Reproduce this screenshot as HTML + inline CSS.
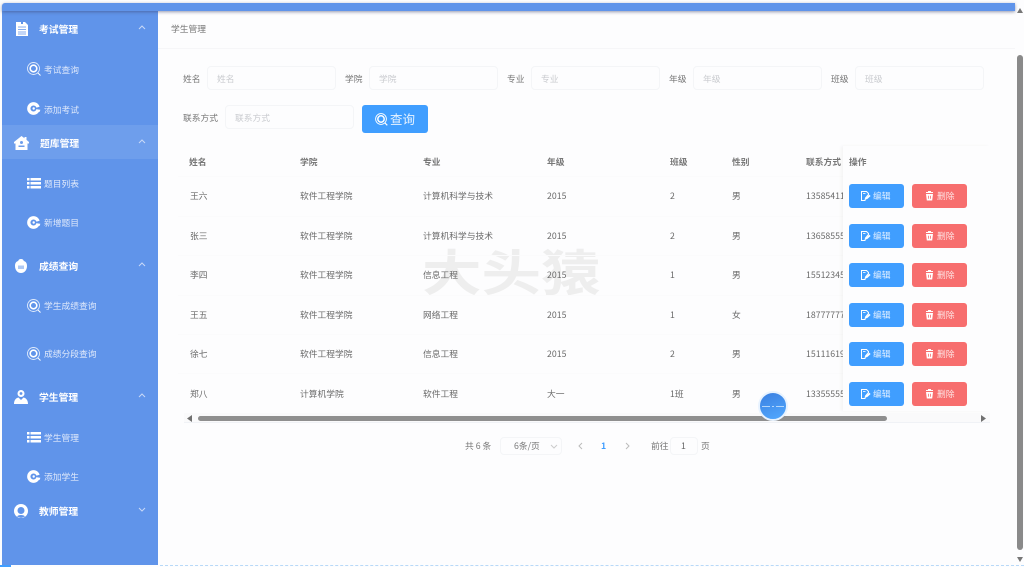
<!DOCTYPE html>
<html lang="zh"><head><meta charset="utf-8"><title>学生管理</title>
<style>
html,body{margin:0;padding:0;width:1024px;height:567px;overflow:hidden;background:#fdfdfe;font-family:"Noto Sans CJK SC","Liberation Sans",sans-serif;}
.a{position:absolute;white-space:nowrap;line-height:14px;}
.top{position:absolute;left:2px;top:3px;width:1013px;height:8px;background:#6094ea;border-radius:3px 0 0 0;box-shadow:0 1px 3px rgba(60,70,110,.55);}
.side{position:absolute;left:2px;top:11px;width:156px;height:554px;background:#6094ea;}
.hl{position:absolute;left:2px;top:125px;width:156px;height:34px;background:#6e9eec;}
.g{color:#fff;font-size:9.8px;font-weight:bold;}
.s{color:#dfe9fb;font-size:8.75px;}
.t{color:#6a6a6a;font-size:8.75px;}
.h{color:#777;font-size:8.75px;font-weight:bold;}
.l{color:#777;font-size:8.75px;}
.ph{color:#c9cbcf;font-size:8.75px;}
.ip{position:absolute;height:24px;border:1px solid #f4f5f7;border-radius:4px;box-sizing:border-box;}
.be,.bd{position:absolute;width:55px;height:24px;border-radius:3px;color:#e4f0ff;font-size:8.75px;line-height:24px;}
.be{left:849px;background:#409eff;}
.bd{left:912px;background:#f76e6e;color:#fde0e0;}
.be span{position:absolute;left:24px;top:0;}
.bd span{position:absolute;left:25px;top:0;}
.be svg{position:absolute;left:12px;top:7px;}
.bd svg{position:absolute;left:13px;top:7px;}
.ln{position:absolute;left:178px;width:812px;height:1px;background:#fbfbfc;}
svg{position:absolute;overflow:visible;}
</style></head><body>
<svg width="0" height="0" style="position:absolute"><defs>
<g id="q"><circle cx="6.500" cy="6.500" r="6" fill="none" stroke="#fff" stroke-width=".9" opacity=".8"/><circle cx="6.500" cy="6.500" r="3.300" fill="none" stroke="#fff" stroke-width="1.600"/><path d="M10.800 10.800l2.700 2.700" stroke="#fff" stroke-width="1"/></g>
<g id="c"><circle cx="6.500" cy="6.500" r="4.700" fill="none" stroke="#fff" stroke-width="3.300"/><path d="M6.500 6.500L13.500 4.500V8z" fill="#6094ea"/><circle cx="6.700" cy="6.500" r="1.200" fill="#fff"/><path d="M9 7.800h4.300l-.5 2H9z" fill="#fff"/></g>
<g id="li"><path d="M0 0h2.500v2.500H0zM3.500 0H14v2.500H3.500zM0 4h2.500v2.500H0zM3.500 4H14v2.500H3.500zM0 8h2.500v2.500H0zM3.500 8H14v2.500H3.500z" fill="#fff"/></g>
<g id="ed"><path d="M.5.500h5l2 2v1L4.500 7 4 9.500H.5z" fill="none" stroke="#fff" stroke-width="1"/><path d="M2 2.500h2.500" stroke="#fff" stroke-width=".8"/><path d="M4.500 8.500l.5-1.800 3.300-3 1.300 1.300-3.300 3z" fill="#fff"/></g>
<g id="de"><path d="M1 1.500h7M3 .5h3" stroke="#fff" stroke-width="1"/><path d="M1 3h7l-.8 6.500H1.800z" fill="#fff"/><path d="M3.500 4.800v3M5.500 4.800v3" stroke="#f76e6e" stroke-width=".8"/></g>
</defs></svg>

<div class="side"></div>
<div class="hl"></div>
<div class="top"></div>

<svg style="left:16px;top:22px" width="12" height="14"><path d="M0 0h5v2h2V0h2l3 3v11H0z" fill="#fff"/><path d="M2 5h8M2 7.500h8M2 10h8M2 12h8" stroke="#6094ea" stroke-width=".8"/></svg>
<div class="a g" style="left:39px;top:22px">考试管理</div>
<svg style="left:138px;top:25px" width="8" height="5"><path d="M1 4l3-3 3 3" fill="none" stroke="#c9d9f7"/></svg>
<svg style="left:27px;top:62px" width="14" height="14"><use href="#q"/></svg>
<div class="a s" style="left:44px;top:63px">考试查询</div>
<svg style="left:27px;top:102px" width="14" height="14"><use href="#c"/></svg>
<div class="a s" style="left:44px;top:103px">添加考试</div>

<svg style="left:14px;top:136px" width="15" height="14"><path d="M7.500 0l3 2.300V1h2v2.900L15 6v1.500h-1.500V14h-12V7.500H0V6z" fill="#fff"/><circle cx="7.500" cy="6.500" r="1.500" fill="#6e9eec"/><path d="M4.500 9.500h6V11h-6z" fill="#6e9eec"/></svg>
<div class="a g" style="left:40px;top:136px">题库管理</div>
<svg style="left:138px;top:139px" width="8" height="5"><path d="M1 4l3-3 3 3" fill="none" stroke="#c9d9f7"/></svg>
<svg style="left:27px;top:178px" width="14" height="11"><use href="#li"/></svg>
<div class="a s" style="left:44px;top:177px">题目列表</div>
<svg style="left:27px;top:216px" width="14" height="14"><use href="#c"/></svg>
<div class="a s" style="left:44px;top:216px">新增题目</div>

<svg style="left:15px;top:259px" width="12" height="14"><path d="M6 0c1.500 0 2.500.7 2.800 2C10.800 2.500 12 4 12 7c0 4-2.500 7-6 7S0 11 0 7c0-3 1.200-4.500 3.200-5C3.500.7 4.500 0 6 0z" fill="#fff"/><path d="M3 6.500h6v3.500H3z" fill="#6094ea" opacity=".5"/></svg>
<div class="a g" style="left:39px;top:258.500px">成绩查询</div>
<svg style="left:138px;top:262px" width="8" height="5"><path d="M1 4l3-3 3 3" fill="none" stroke="#c9d9f7"/></svg>
<svg style="left:27px;top:299px" width="14" height="14"><use href="#q"/></svg>
<div class="a s" style="left:44px;top:299px">学生成绩查询</div>
<svg style="left:27px;top:347px" width="14" height="14"><use href="#q"/></svg>
<div class="a s" style="left:44px;top:347px">成绩分段查询</div>

<svg style="left:14px;top:390px" width="14" height="14"><circle cx="7" cy="3.500" r="3.500" fill="#fff"/><circle cx="7" cy="3.500" r="1.400" fill="#6094ea"/><path d="M0 14c0-4 2-6 4.500-6.500L7 10l2.500-2.500C12 8 14 10 14 14z" fill="#fff"/></svg>
<div class="a g" style="left:39px;top:390px">学生管理</div>
<svg style="left:138px;top:393px" width="8" height="5"><path d="M1 4l3-3 3 3" fill="none" stroke="#c9d9f7"/></svg>
<svg style="left:27px;top:432px" width="14" height="11"><use href="#li"/></svg>
<div class="a s" style="left:44px;top:431px">学生管理</div>
<svg style="left:27px;top:470px" width="14" height="14"><use href="#c"/></svg>
<div class="a s" style="left:44px;top:470px">添加学生</div>

<svg style="left:14px;top:504px" width="14" height="14"><circle cx="7" cy="7" r="7" fill="#fff"/><circle cx="7" cy="6.500" r="3.500" fill="#6094ea"/><path d="M3 12.500c1-2 7-2 8 0l-4 1.500z" fill="#6094ea"/></svg>
<div class="a g" style="left:39px;top:504px">教师管理</div>
<svg style="left:138px;top:507px" width="8" height="5"><path d="M1 1l3 3 3-3" fill="none" stroke="#c9d9f7"/></svg>

<div class="a" style="left:0;top:565px;width:11px;height:2px;background:#409eff"></div>
<div class="a" style="left:160px;top:565px;width:864px;height:0;border-top:1px dashed #b8d9f8"></div>

<div class="a t" style="left:171px;top:22px;color:#777">学生管理</div>
<div class="a" style="left:158px;top:48px;width:857px;height:1px;background:#f6f6f8"></div>

<div class="a l" style="left:183px;top:72px">姓名</div>
<div class="ip" style="left:207px;top:66px;width:129px"></div><div class="a ph" style="left:217px;top:72px">姓名</div>
<div class="a l" style="left:345px;top:72px">学院</div>
<div class="ip" style="left:369px;top:66px;width:129px"></div><div class="a ph" style="left:379px;top:72px">学院</div>
<div class="a l" style="left:507px;top:72px">专业</div>
<div class="ip" style="left:531px;top:66px;width:129px"></div><div class="a ph" style="left:541px;top:72px">专业</div>
<div class="a l" style="left:669px;top:72px">年级</div>
<div class="ip" style="left:693px;top:66px;width:129px"></div><div class="a ph" style="left:703px;top:72px">年级</div>
<div class="a l" style="left:831px;top:72px">班级</div>
<div class="ip" style="left:855px;top:66px;width:129px"></div><div class="a ph" style="left:865px;top:72px">班级</div>
<div class="a l" style="left:183px;top:111px">联系方式</div>
<div class="ip" style="left:225px;top:105px;width:129px"></div><div class="a ph" style="left:235px;top:111px">联系方式</div>
<div class="a" style="left:362px;top:105px;width:66px;height:28px;background:#409eff;border-radius:3px"></div>
<svg style="left:375px;top:113px" width="13" height="13"><circle cx="6" cy="6" r="5.400" fill="none" stroke="#fff" stroke-width=".9"/><circle cx="6" cy="6" r="3.200" fill="none" stroke="#fff" stroke-width="1.500"/><path d="M9.800 9.800l2.500 2.500" stroke="#fff" stroke-width="1.200"/></svg>
<div class="a" style="left:390px;top:112px;font-size:12.500px;color:#e8f3ff">查询</div>

<div class="a" style="left:422px;top:235px;font-size:59.500px;line-height:70px;font-weight:bold;color:#eeeeee;transform:scaleY(.82);transform-origin:center">大头猿</div>

<div class="ln" style="top:176px"></div><div class="ln" style="top:216px"></div><div class="ln" style="top:255px"></div><div class="ln" style="top:295px"></div><div class="ln" style="top:334px"></div><div class="ln" style="top:373px"></div>

<div class="a h" style="left:189px;top:155px">姓名</div><div class="a h" style="left:300px;top:155px">学院</div><div class="a h" style="left:423px;top:155px">专业</div><div class="a h" style="left:547px;top:155px">年级</div><div class="a h" style="left:670px;top:155px">班级</div><div class="a h" style="left:732px;top:155px">性别</div><div class="a h" style="left:806px;top:155px">联系方式</div>

<div class="a t" style="left:190px;top:189px">王六</div><div class="a t" style="left:300px;top:189px">软件工程学院</div><div class="a t" style="left:423px;top:189px">计算机科学与技术</div><div class="a t" style="left:547px;top:189px">2015</div><div class="a t" style="left:670px;top:189px">2</div><div class="a t" style="left:732px;top:189px">男</div><div class="a t" style="left:806px;top:189px">13585411</div>
<div class="a t" style="left:190px;top:229px">张三</div><div class="a t" style="left:300px;top:229px">软件工程学院</div><div class="a t" style="left:423px;top:229px">计算机科学与技术</div><div class="a t" style="left:547px;top:229px">2015</div><div class="a t" style="left:670px;top:229px">2</div><div class="a t" style="left:732px;top:229px">男</div><div class="a t" style="left:806px;top:229px">13658555</div>
<div class="a t" style="left:190px;top:268px">李四</div><div class="a t" style="left:300px;top:268px">软件工程学院</div><div class="a t" style="left:423px;top:268px">信息工程</div><div class="a t" style="left:547px;top:268px">2015</div><div class="a t" style="left:670px;top:268px">1</div><div class="a t" style="left:732px;top:268px">男</div><div class="a t" style="left:806px;top:268px">15512345</div>
<div class="a t" style="left:190px;top:308px">王五</div><div class="a t" style="left:300px;top:308px">软件工程学院</div><div class="a t" style="left:423px;top:308px">网络工程</div><div class="a t" style="left:547px;top:308px">2015</div><div class="a t" style="left:670px;top:308px">1</div><div class="a t" style="left:732px;top:308px">女</div><div class="a t" style="left:806px;top:308px">18777777</div>
<div class="a t" style="left:190px;top:347px">徐七</div><div class="a t" style="left:300px;top:347px">软件工程学院</div><div class="a t" style="left:423px;top:347px">信息工程</div><div class="a t" style="left:547px;top:347px">2015</div><div class="a t" style="left:670px;top:347px">2</div><div class="a t" style="left:732px;top:347px">男</div><div class="a t" style="left:806px;top:347px">15111619</div>
<div class="a t" style="left:190px;top:387px">郑八</div><div class="a t" style="left:300px;top:387px">计算机学院</div><div class="a t" style="left:423px;top:387px">软件工程</div><div class="a t" style="left:547px;top:387px">大一</div><div class="a t" style="left:670px;top:387px">1班</div><div class="a t" style="left:732px;top:387px">男</div><div class="a t" style="left:806px;top:387px">13355555</div>

<div class="a" style="left:843px;top:146px;width:147px;height:265px;background:#fdfdfe;box-shadow:-2px 0 3px rgba(0,0,0,.04)"></div>
<div class="a h" style="left:849px;top:155px">操作</div>
<div class="be" style="top:184px"><svg width="10" height="10"><use href="#ed"/></svg><span>编辑</span></div><div class="bd" style="top:184px"><svg width="9" height="10"><use href="#de"/></svg><span>删除</span></div>
<div class="be" style="top:224px"><svg width="10" height="10"><use href="#ed"/></svg><span>编辑</span></div><div class="bd" style="top:224px"><svg width="9" height="10"><use href="#de"/></svg><span>删除</span></div>
<div class="be" style="top:263px"><svg width="10" height="10"><use href="#ed"/></svg><span>编辑</span></div><div class="bd" style="top:263px"><svg width="9" height="10"><use href="#de"/></svg><span>删除</span></div>
<div class="be" style="top:303px"><svg width="10" height="10"><use href="#ed"/></svg><span>编辑</span></div><div class="bd" style="top:303px"><svg width="9" height="10"><use href="#de"/></svg><span>删除</span></div>
<div class="be" style="top:342px"><svg width="10" height="10"><use href="#ed"/></svg><span>编辑</span></div><div class="bd" style="top:342px"><svg width="9" height="10"><use href="#de"/></svg><span>删除</span></div>
<div class="be" style="top:382px"><svg width="10" height="10"><use href="#ed"/></svg><span>编辑</span></div><div class="bd" style="top:382px"><svg width="9" height="10"><use href="#de"/></svg><span>删除</span></div>

<div class="a" style="left:184px;top:413px;width:806px;height:10px;background:#fafafb;border-bottom:1px solid #f0f2f6;box-sizing:border-box"></div>
<div class="a" style="left:198px;top:416px;width:689px;height:5px;background:#8f8f8f;border-radius:3px"></div>
<svg style="left:187px;top:415px" width="6" height="7"><path d="M5 0v7L0 3.500z" fill="#707070"/></svg>
<svg style="left:981px;top:415px" width="6" height="7"><path d="M0 0v7l5-3.500z" fill="#707070"/></svg>

<div class="a" style="left:758px;top:391px;width:30px;height:30px;border-radius:50%;background:linear-gradient(160deg,#3a7fe0,#52a9ff);border:2px solid #e8f3ff;box-sizing:border-box"></div>
<svg style="left:762px;top:405px" width="22" height="3"><path d="M0 1.500h8M10 1.500h2M14 1.500h8" stroke="#d8ebff" stroke-width=".8"/></svg>

<div class="a l" style="left:465px;top:439px">共 6 条</div>
<div class="ip" style="left:500px;top:437px;width:62px;height:18px"></div>
<div class="a l" style="left:514px;top:439px">6条/页</div>
<svg style="left:550px;top:444px" width="8" height="5"><path d="M1 1l3 3 3-3" fill="none" stroke="#ccc"/></svg>
<svg style="left:578px;top:442px" width="5" height="8"><path d="M4 1L1 4l3 3" fill="none" stroke="#bbb"/></svg>
<div class="a" style="left:601px;top:439px;font-size:8.750px;font-weight:bold;color:#409eff">1</div>
<svg style="left:625px;top:442px" width="5" height="8"><path d="M1 1l3 3-3 3" fill="none" stroke="#bbb"/></svg>
<div class="a l" style="left:651px;top:439px">前往</div>
<div class="ip" style="left:670px;top:437px;width:28px;height:18px"></div>
<div class="a l" style="left:681px;top:439px;color:#666">1</div>
<div class="a l" style="left:701px;top:439px">页</div>

<div class="a" style="left:1017px;top:55px;width:6px;height:495px;background:#8a8a8a;border-radius:3px"></div>
<svg style="left:1017px;top:8px" width="6" height="5"><path d="M0 5h6L3 0z" fill="#777"/></svg>
<svg style="left:1017px;top:557px" width="6" height="5"><path d="M0 0h6L3 5z" fill="#777"/></svg>
</body></html>
